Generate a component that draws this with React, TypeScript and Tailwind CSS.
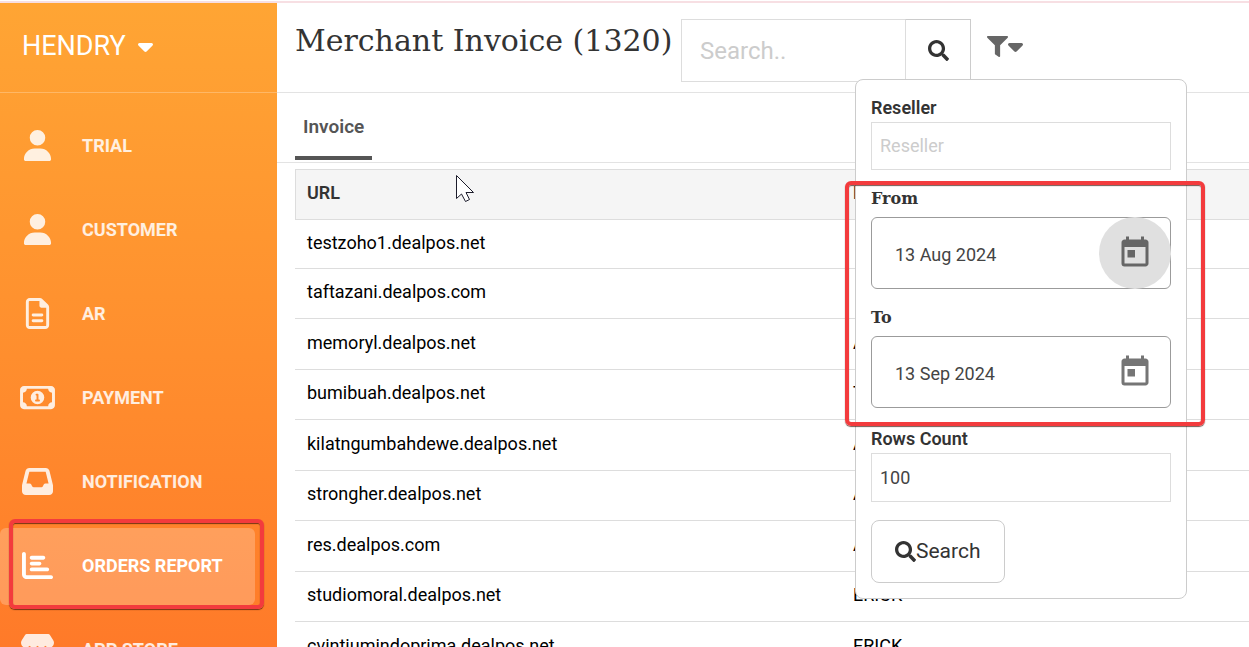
import type { ReactNode } from "react";
import type { IconType } from "react-icons";
import { FaCaretDown, FaChartBar, FaInbox, FaRegFileLines, FaRegMoneyBill1, FaStore, FaUser } from "react-icons/fa6";
import { FaFilter, FaSearch } from "react-icons/fa";
import { MdToday } from "react-icons/md";

type MenuItem = { label: string; icon: IconType; active?: boolean };

const menu: MenuItem[] = [
    { label: "TRIAL", icon: FaUser },
    { label: "CUSTOMER", icon: FaUser },
    { label: "AR", icon: FaRegFileLines },
    { label: "PAYMENT", icon: FaRegMoneyBill1 },
    { label: "NOTIFICATION", icon: FaInbox },
    { label: "ORDERS REPORT", icon: FaChartBar, active: true },
    { label: "APP STORE", icon: FaStore },
];

const invoices = [
    { url: "testzoho1.dealpos.net", reseller: "" },
    { url: "taftazani.dealpos.com", reseller: "" },
    { url: "memoryl.dealpos.net", reseller: "A" },
    { url: "bumibuah.dealpos.net", reseller: "T" },
    { url: "kilatngumbahdewe.dealpos.net", reseller: "A" },
    { url: "strongher.dealpos.net", reseller: "A" },
    { url: "res.dealpos.com", reseller: "A" },
    { url: "studiomoral.dealpos.net", reseller: "ERICK" },
    { url: "cvintiumindoprima.dealpos.net", reseller: "ERICK" },
];

const Highlight = ({ className }: { className: string }) => (
    <div className={`absolute pointer-events-none rounded-md border-4 border-[#f33b3d] shadow-[0_1px_1px_rgba(60,20,10,0.7),inset_0_1px_1px_rgba(60,20,10,0.7)] ${className}`} />
);

const Cursor = () => (
    <svg className="absolute left-[179px] top-[171px] w-5 h-8" viewBox="0 0 20 32" fill="none">
        <path d="M0.5 1.5V24.5L5.5 20L9.5 27.5L13.5 25.5L10 18.5H17.5Z" fill="white" stroke="#1c1c2b" strokeWidth="1" />
    </svg>
);

function Sidebar() {
    return (
        <aside className="w-[277px] shrink-0 bg-linear-to-b from-[#ffa534] to-[#ff7a29] text-white">
            <div className="h-[90px] border-b border-white/25 pl-[22px]">
                <button className="flex h-[86px] items-center gap-3 text-[27px]">
                    HENDRY
                    <FaCaretDown className="h-6 w-[15px]" />
                </button>
            </div>
            <nav className="flex flex-col gap-[7px] pt-[15px]">
                {menu.map(({ label, icon: Icon, active }) => (
                    <div key={label} className="relative shrink-0">
                        <a
                            href="#"
                            className={`mr-[22px] flex h-[77px] items-center rounded-md pb-[2px] text-lg font-bold ${active ? "bg-white/23" : "text-white/85"}`}
                        >
                            <span className="flex w-[74px] justify-center">
                                <Icon className="h-[31px] w-[35px]" />
                            </span>
                            <span className="pl-2">{label}</span>
                        </a>
                        {active && <Highlight className="-top-[9px] -bottom-1 left-[9px] right-[13px]" />}
                    </div>
                ))}
            </nav>
        </aside>
    );
}

function DateField({ id, label, value, focused }: { id: string; label: string; value: string; focused?: boolean }) {
    return (
        <div className="mb-5">
            <label htmlFor={id} className="mb-[9px] block font-['DejaVu_Serif',serif] text-base leading-[18px] font-bold">
                {label}
            </label>
            <div className="flex h-[72px] rounded-md border border-[#9b9b9b]">
                <input id={id} defaultValue={value} className="min-w-0 flex-1 pt-1 pl-[23px] text-lg text-[#444] outline-none" />
                <button
                    type="button"
                    aria-label={`Pick ${label}`}
                    className={`-my-px -mr-px flex size-[72px] items-center justify-center rounded-full ${focused ? "bg-[#e0e0e0] text-[#666]" : "text-[#757575]"}`}
                >
                    <MdToday className="size-9" />
                </button>
            </div>
        </div>
    );
}

function TextField({ id, label, children }: { id: string; label: string; children: ReactNode }) {
    return (
        <div>
            <label htmlFor={id} className="mb-[2px] block text-lg leading-[25px] font-semibold">{label}</label>
            {children}
        </div>
    );
}

function FilterPanel() {
    return (
        <form className="absolute top-[60px] -left-[132px] z-10 w-[332px] rounded-lg border border-[#ccc] bg-white p-[15px]">
            <TextField id="reseller" label="Reseller">
                <input id="reseller" placeholder="Reseller" className="mb-5 block h-12 w-full border border-[#ddd] px-2 pb-[2px] text-lg placeholder:text-[#ccc]" />
            </TextField>
            <div className="relative">
                <DateField id="from" label="From" value="13 Aug 2024" focused />
                <DateField id="to" label="To" value="13 Sep 2024" />
                <Highlight className="-top-[9px] -bottom-[18px] -left-[26px] -right-[34px]" />
            </div>
            <div className="-mt-[2px]">
                <TextField id="rows" label="Rows Count">
                    <input id="rows" defaultValue="100" className="mb-[18px] block h-[49px] w-full border border-[#ddd] px-2 text-lg text-[#444]" />
                </TextField>
            </div>
            <button type="button" className="flex h-[63px] items-center rounded-lg border border-[#ccc] px-[23px] text-[21px]">
                <FaSearch className="size-[21px]" />
                Search
            </button>
        </form>
    );
}

function Header() {
    return (
        <header className="flex h-[90px] items-start border-b border-[#e3e3e3] pt-4 pl-[18px]">
            <h1 className="w-[386px] shrink-0 font-['DejaVu_Serif',serif] text-[30px] leading-[44px] whitespace-nowrap">Merchant Invoice (1320)</h1>
            <div className="flex h-[63px]">
                <input aria-label="Search" placeholder="Search.." className="w-[224px] border border-r-0 border-[#ddd] px-[18px] text-2xl placeholder:text-[#ccc]" />
                <button aria-label="Search" className="flex w-[66px] items-center justify-center border border-[#ccc] border-l-[#ddd]">
                    <FaSearch className="size-[21px]" />
                </button>
            </div>
            <div className="relative ml-4">
                <button aria-label="Filter" className="flex h-[54px] items-center text-[#666]">
                    <FaFilter className="size-[21px]" />
                    <FaCaretDown className="h-6 w-[15px]" />
                </button>
                <FilterPanel />
            </div>
        </header>
    );
}

function InvoiceTable() {
    return (
        <div className="pt-[6px] pl-[18px]">
            <table className="w-full table-fixed border-separate border-spacing-0 text-left text-lg">
                <thead>
                    <tr className="h-[51px] bg-[#f5f5f5]">
                        <th className="w-[546px] border-y border-l border-[#ddd] pt-0 pr-3 pb-[3px] pl-[11px] font-semibold">URL</th>
                        <th className="border-y border-[#ddd] px-3 pt-0 pb-[3px] font-semibold">Reseller</th>
                    </tr>
                </thead>
                <tbody className="text-black">
                    {invoices.map((row) => (
                        <tr key={row.url} className="h-[51px] first:h-[49px] even:h-[50px]">
                            <td className="border-b border-[#ddd] px-3 pt-0 pb-[3px]">{row.url}</td>
                            <td className="border-b border-[#ddd] px-3 pt-0 pb-[3px]">{row.reseller}</td>
                        </tr>
                    ))}
                </tbody>
            </table>
        </div>
    );
}

export default function App() {
    return (
        <div className="flex h-screen flex-col overflow-hidden bg-white font-[Roboto,sans-serif] text-[#333]">
            <div className="mt-px h-[2px] shrink-0 bg-[#f7dfe3]" />
            <div className="flex min-h-0 flex-1">
                <Sidebar />
                <main className="relative min-w-0 flex-1">
                    <Header />
                    <div className="h-[70px] border-b border-[#e3e3e3] pl-[18px]">
                        <button className="h-[67px] border-b-4 border-[#555] px-2 pt-[6px] text-[19px] font-semibold text-[#555]">Invoice</button>
                    </div>
                    <InvoiceTable />
                    <Cursor />
                </main>
            </div>
        </div>
    );
}
